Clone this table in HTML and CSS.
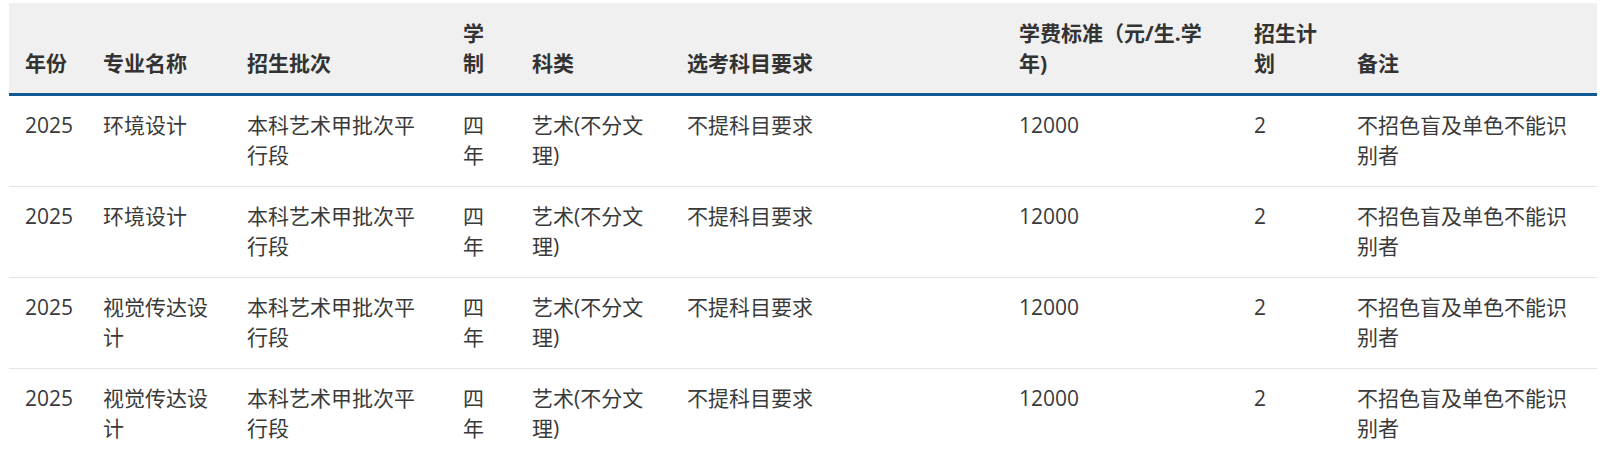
FILE: index.html
```html
<!DOCTYPE html>
<html lang="zh-CN">
<head>
<meta charset="utf-8">
<title>招生计划</title>
<link rel="stylesheet" href="styles.css">
</head>
<body>
<table class="plan">
  <colgroup>
    <col class="c1"><col class="c2"><col class="c3"><col class="c4"><col class="c5"><col class="c6"><col class="c7"><col class="c8"><col class="c9">
  </colgroup>
  <thead>
    <tr>
      <th>年份</th><th>专业名称</th><th>招生批次</th><th>学制</th><th>科类</th><th>选考科目要求</th><th>学费标准（元/生.学年)</th><th>招生计划</th><th>备注</th>
    </tr>
  </thead>
  <tbody>
    <tr>
      <td>2025</td><td>环境设计</td><td>本科艺术甲批次平行段</td><td>四年</td><td>艺术(不分文理)</td><td>不提科目要求</td><td>12000</td><td>2</td><td>不招色盲及单色不能识别者</td>
    </tr>
    <tr>
      <td>2025</td><td>环境设计</td><td>本科艺术甲批次平行段</td><td>四年</td><td>艺术(不分文理)</td><td>不提科目要求</td><td>12000</td><td>2</td><td>不招色盲及单色不能识别者</td>
    </tr>
    <tr>
      <td>2025</td><td>视觉传达设计</td><td>本科艺术甲批次平行段</td><td>四年</td><td>艺术(不分文理)</td><td>不提科目要求</td><td>12000</td><td>2</td><td>不招色盲及单色不能识别者</td>
    </tr>
    <tr>
      <td>2025</td><td>视觉传达设计</td><td>本科艺术甲批次平行段</td><td>四年</td><td>艺术(不分文理)</td><td>不提科目要求</td><td>12000</td><td>2</td><td>不招色盲及单色不能识别者</td>
    </tr>
  </tbody>
</table>
</body>
</html>
```

FILE: styles.css
```css
html, body {
  background: #ffffff;
}
body {
  margin: 3px 3px 0 9px;
  font-family: "Open Sans", "Noto Sans CJK SC", sans-serif;
  font-size: 21px;
  line-height: 30px;
  color: #333333;
  overflow: hidden;
}
.plan {
  width: 1588px;
  border-collapse: collapse;
  table-layout: fixed;
}
.c1 { width: 78px; }
.c2 { width: 144px; }
.c3 { width: 216px; }
.c4 { width: 69px; }
.c5 { width: 155px; }
.c6 { width: 332px; }
.c7 { width: 235px; }
.c8 { width: 103px; }
.c9 { width: 256px; }
.plan th {
  background: #f0f0f0;
  font-weight: bold;
  text-align: left;
  vertical-align: bottom;
  padding: 15px 16px;
  border-bottom: 3px solid #0f5a94;
  color: #333333;
}
.plan td {
  vertical-align: top;
  padding: 14px 16px 16px;
  border-top: 1px solid #e5e5e5;
  font-weight: normal;
  color: #3a3a3a;
}
.plan tbody tr:first-child td {
  border-top: none;
}
```
